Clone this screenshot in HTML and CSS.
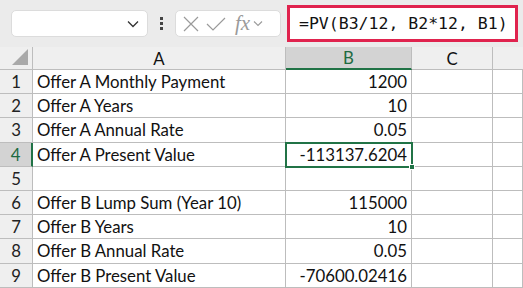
FILE: index.html
```html
<!DOCTYPE html>
<html lang="en">
<head>
    <meta charset="UTF-8">
    <title>PV Sheet</title>
    <link rel="stylesheet" href="styles.css">
</head>
<body>
    <div class="toolbar">
        <div class="name-box">
            <svg class="chev" width="12" height="8" viewBox="0 0 12 8"><path d="M1 1.5 L6 6.5 L11 1.5" fill="none" stroke="#333" stroke-width="1.3"/></svg>
        </div>
        <div class="dots"><span></span><span></span><span></span></div>
        <div class="fx-box">
            <svg width="18" height="18" viewBox="0 0 18 18"><path d="M2 2 L16 16 M16 2 L2 16" stroke="#9a9a9a" stroke-width="1.2"/></svg>
            <svg width="20" height="16" viewBox="0 0 20 16"><path d="M1 8 L7 14 L19 2" fill="none" stroke="#9a9a9a" stroke-width="1.2"/></svg>
            <span class="fx">fx</span>
            <svg width="10" height="7" viewBox="0 0 10 7"><path d="M1 1.5 L5 5.5 L9 1.5" fill="none" stroke="#9a9a9a" stroke-width="1.1"/></svg>
        </div>
        <div class="formula">=PV(B3/12, B2*12, B1)</div>
    </div>

    <div class="sheet">
        <div class="corner"><span class="tri"></span></div>
        <div class="col-head">A</div>
        <div class="col-head active">B</div>
        <div class="col-head">C</div>
        <div class="col-head last"></div>

        <div class="row-head">1</div><div class="cell">Offer A Monthly Payment</div><div class="cell num">1200</div><div class="cell"></div><div class="cell"></div>
        <div class="row-head">2</div><div class="cell">Offer A Years</div><div class="cell num">10</div><div class="cell"></div><div class="cell"></div>
        <div class="row-head">3</div><div class="cell">Offer A Annual Rate</div><div class="cell num">0.05</div><div class="cell"></div><div class="cell"></div>
        <div class="row-head active">4</div><div class="cell">Offer A Present Value</div><div class="cell num selected">-113137.6204<span class="handle"></span></div><div class="cell"></div><div class="cell"></div>
        <div class="row-head">5</div><div class="cell"></div><div class="cell num"></div><div class="cell"></div><div class="cell"></div>
        <div class="row-head">6</div><div class="cell">Offer B Lump Sum (Year 10)</div><div class="cell num">115000</div><div class="cell"></div><div class="cell"></div>
        <div class="row-head">7</div><div class="cell">Offer B Years</div><div class="cell num">10</div><div class="cell"></div><div class="cell"></div>
        <div class="row-head">8</div><div class="cell">Offer B Annual Rate</div><div class="cell num">0.05</div><div class="cell"></div><div class="cell"></div>
        <div class="row-head">9</div><div class="cell">Offer B Present Value</div><div class="cell num">-70600.02416</div><div class="cell"></div><div class="cell"></div>
    </div>
</body>
</html>
```

FILE: styles.css
```css
* {
    box-sizing: border-box;
}
body {
    margin: 0;
    font-family: Lato, "Open Sans", sans-serif;
    color: #111;
    background: #fff;
    width: 523px;
    overflow: hidden;
}
.toolbar {
    height: 47px;
    background: #ebebeb;
    display: flex;
    align-items: center;
    padding-left: 11px;
}
.name-box {
    width: 137px;
    height: 27px;
    background: #fff;
    border: 1px solid #dcdcdc;
    border-radius: 5px;
    display: flex;
    align-items: center;
    justify-content: flex-end;
    padding-right: 8px;
}
.dots {
    width: 27px;
    display: flex;
    flex-direction: column;
    align-items: center;
    gap: 2px;
}
.dots span {
    width: 3px;
    height: 3px;
    background: #444;
}
.fx-box {
    width: 106px;
    height: 27px;
    background: #fff;
    border: 1px solid #dcdcdc;
    border-radius: 5px;
    display: flex;
    align-items: center;
    gap: 6px;
    padding-left: 6px;
}
.fx {
    font-family: "Liberation Serif", serif;
    font-style: italic;
    font-size: 21px;
    color: #9a9a9a;
    margin-left: 3px;
    margin-right: -3px;
}
.formula {
    margin-left: 6px;
    width: 231px;
    height: 37px;
    background: #fff;
    border: 3px solid #e0234e;
    font-family: "DejaVu Sans Mono", monospace;
    font-size: 16.5px;
    color: #111;
    display: flex;
    align-items: center;
    padding-left: 9px;
    white-space: nowrap;
}
.sheet {
    display: grid;
    grid-template-columns: 33px 253px 126px 81px 30px;
    grid-template-rows: 23px repeat(9, 24.2px);
    font-size: 16.8px;
}
.corner, .col-head, .row-head {
    background: #efefef;
    border-right: 1px solid #bdbdbd;
    border-bottom: 1px solid #bdbdbd;
}
.corner {
    position: relative;
}
.tri {
    position: absolute;
    right: 4px;
    bottom: 4px;
    width: 0;
    height: 0;
    border-left: 16px solid transparent;
    border-bottom: 16px solid #a9a9a9;
}
.col-head {
    display: flex;
    align-items: center;
    justify-content: center;
}
.col-head.last {
    border-right: none;
}
.col-head.active {
    background: #d3d3d3;
    color: #1e6b41;
    border-bottom: 2px solid #217346;
}
.row-head {
    display: flex;
    align-items: center;
    justify-content: center;
    color: #222;
}
.row-head.active {
    background: #d3d3d3;
    color: #1e6b41;
    border-right: 2px solid #217346;
}
.cell {
    border-right: 1px solid #bdbdbd;
    border-bottom: 1px solid #bdbdbd;
    display: flex;
    align-items: center;
    padding-left: 4px;
    white-space: nowrap;
}
.cell.num {
    justify-content: flex-end;
    padding-right: 4px;
}
.cell.selected {
    position: relative;
    outline: 2px solid #217346;
    outline-offset: -1px;
    z-index: 1;
}
.handle {
    position: absolute;
    right: -4px;
    bottom: -4px;
    width: 6px;
    height: 6px;
    background: #217346;
    border: 1px solid #fff;
}
```
